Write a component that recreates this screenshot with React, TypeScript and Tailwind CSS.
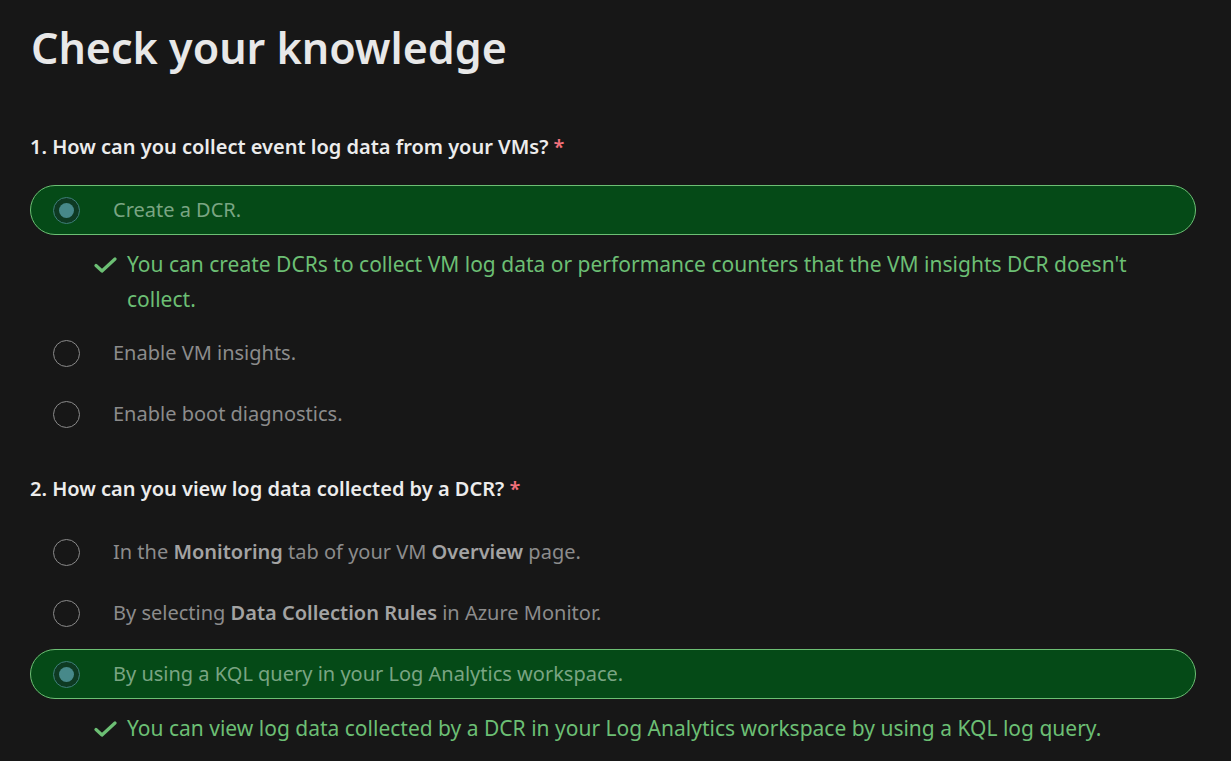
type Part = { text: string; bold?: boolean }

type Option = {
  parts: Part[]
  selected?: boolean
  feedback?: string
}

type Question = {
  title: string
  options: Option[]
}

const QUESTIONS: Question[] = [
  {
    title: '1. How can you collect event log data from your VMs?',
    options: [
      {
        parts: [{ text: 'Create a DCR.' }],
        selected: true,
        feedback:
          "You can create DCRs to collect VM log data or performance counters that the VM insights DCR doesn't collect.",
      },
      { parts: [{ text: 'Enable VM insights.' }] },
      { parts: [{ text: 'Enable boot diagnostics.' }] },
    ],
  },
  {
    title: '2. How can you view log data collected by a DCR?',
    options: [
      {
        parts: [
          { text: 'In the ' },
          { text: 'Monitoring', bold: true },
          { text: ' tab of your VM ' },
          { text: 'Overview', bold: true },
          { text: ' page.' },
        ],
      },
      {
        parts: [
          { text: 'By selecting ' },
          { text: 'Data Collection Rules', bold: true },
          { text: ' in Azure Monitor.' },
        ],
      },
      {
        parts: [{ text: 'By using a KQL query in your Log Analytics workspace.' }],
        selected: true,
        feedback: 'You can view log data collected by a DCR in your Log Analytics workspace by using a KQL log query.',
      },
    ],
  },
]

function Radio({ selected }: { selected?: boolean }) {
  if (selected) {
    return (
      <span className="flex h-[27px] w-[27px] shrink-0 items-center justify-center rounded-full border border-[#3f7f7a] bg-[#0e3a22]">
        <span className="h-[15px] w-[15px] rounded-full bg-[#47898a]" />
      </span>
    )
  }
  return <span className="h-[27px] w-[27px] shrink-0 rounded-full border border-[#8a8a8a]" />
}

function CheckMark() {
  return (
    <svg className="mt-[10px] h-[16px] w-[23px] shrink-0" viewBox="0 0 23 16" fill="none">
      <polyline points="2,8.5 8,14 21,2" stroke="#6cbf74" strokeWidth="3.2" strokeLinecap="round" strokeLinejoin="round" />
    </svg>
  )
}

function OptionRow({ option }: { option: Option }) {
  return (
    <div className="flex flex-col">
      <div
        className={
          option.selected
            ? 'flex h-[50px] items-center gap-[33px] rounded-full border border-[#6cbf74] bg-[#054a17] pl-[22px]'
            : 'flex h-[50px] items-center gap-[33px] rounded-full border border-transparent pl-[22px]'
        }
      >
        <Radio selected={option.selected} />
        <span className={option.selected ? 'text-[#7aa583]' : 'text-[#8c8c8c]'}>
          {option.parts.map((p, i) =>
            p.bold ? (
              <b key={i} className={option.selected ? 'font-semibold' : 'font-semibold text-[#a3a3a3]'}>
                {p.text}
              </b>
            ) : (
              <span key={i}>{p.text}</span>
            )
          )}
        </span>
      </div>
      {option.feedback && (
        <div className="flex items-start gap-[10px] pt-[12px] pl-[64px] pr-[60px]">
          <CheckMark />
          <p className="text-[21px] leading-[35px] text-[#6cbf74]">{option.feedback}</p>
        </div>
      )}
    </div>
  )
}

export default function App() {
  return (
    <div className="min-h-screen bg-[#171717] px-[30px] pt-[20px] pb-10 font-['Segoe_UI','Noto_Sans',sans-serif] text-[20px]">
      <h1 className="pl-[1px] text-[43px] font-semibold leading-[56px] text-[#e8e8e8]">Check your knowledge</h1>

      <div className="mt-[57px] flex flex-col gap-[36px]">
        {QUESTIONS.map((q) => (
          <section key={q.title}>
            <h2 className="text-[20px] font-semibold leading-[28px] text-[#ececec]">
              {q.title} <span className="text-[#f1707b]">*</span>
            </h2>
            <div className="mt-[24px] mr-[5px] flex flex-col gap-[11px]">
              {q.options.map((o, i) => (
                <OptionRow key={i} option={o} />
              ))}
            </div>
          </section>
        ))}
      </div>
    </div>
  )
}
